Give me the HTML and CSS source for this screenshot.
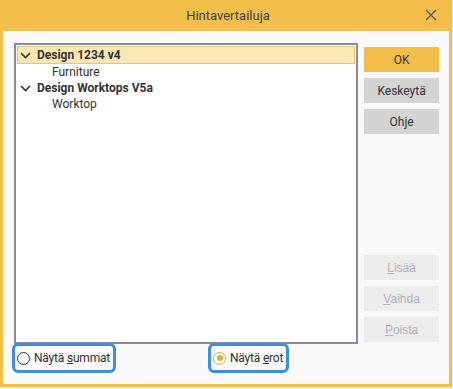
FILE: index.html
```html
<!DOCTYPE html>
<html lang="fi">
<head>
  <meta charset="UTF-8">
  <title>Hintavertailuja</title>
  <link rel="stylesheet" href="styles.css">
</head>
<body>

<div class="window">
  <div class="titlebar">
    <span class="title">Hintavertailuja</span>
    <button class="close-btn" aria-label="Sulje">
      <svg width="12" height="12" viewBox="0 0 12 12">
        <path d="M1 1 L11 11 M11 1 L1 11" stroke="#555" stroke-width="1.2" fill="none"/>
      </svg>
    </button>
  </div>

  <div class="content">
    <div class="main">
      <!-- Tree -->
      <div class="tree">
        <div class="row group selected">
          <svg class="chevron" width="11" height="7" viewBox="0 0 11 7">
            <path d="M1 1 L5.5 5.5 L10 1" stroke="#333" stroke-width="1.6" fill="none"/>
          </svg>
          <span>Design 1234 v4</span>
        </div>
        <div class="row child">Furniture</div>
        <div class="row group">
          <svg class="chevron" width="11" height="7" viewBox="0 0 11 7">
            <path d="M1 1 L5.5 5.5 L10 1" stroke="#333" stroke-width="1.6" fill="none"/>
          </svg>
          <span>Design Worktops V5a</span>
        </div>
        <div class="row child">Worktop</div>
      </div>

      <!-- Options -->
      <div class="options">
        <label class="radio focus">
          <span class="dot"></span>
          <span>Näytä <u>s</u>ummat</span>
        </label>
        <label class="radio focus checked">
          <span class="dot"></span>
          <span>Näytä <u>e</u>rot</span>
        </label>
      </div>
    </div>

    <div class="side">
      <div class="btn-group">
        <button class="btn primary">OK</button>
        <button class="btn">Keskeytä</button>
        <button class="btn">Ohje</button>
      </div>
      <div class="btn-group">
        <button class="btn disabled"><u>L</u>isää</button>
        <button class="btn disabled"><u>V</u>aihda</button>
        <button class="btn disabled"><u>P</u>oista</button>
      </div>
    </div>
  </div>
</div>

</body>
</html>
```

FILE: styles.css
```css
:root {
  --accent: #f4be4a;
  --text: #333;
  --panel: #f9f9f9;
  --btn: #d4d4d4;
  --btn-off: #ececec;
  --focus: #3a8ee6;
}

body {
  margin: 0;
  background: #ededed;
  font-family: Roboto, "Noto Sans", Arial, sans-serif;
  font-size: 12px;
  color: var(--text);
}

.window {
  width: 446px;
  height: 384px;
  border: 3px solid var(--accent);
  border-top: none;
  background: var(--panel);
  display: flex;
  flex-direction: column;
}

.titlebar {
  height: 31px;
  background: var(--accent);
  display: flex;
  align-items: center;
  justify-content: center;
  position: relative;
  margin: 0 -3px;
}

.title {
  font-size: 13px;
  color: #3f3f3f;
  padding-left: 4px;
}

.close-btn {
  position: absolute;
  right: 14px;
  top: 8px;
  border: none;
  background: none;
  padding: 0;
  width: 14px;
  height: 14px;
  display: flex;
  align-items: center;
  justify-content: center;
}

.content {
  flex: 1;
  display: flex;
  gap: 6px;
  padding: 12px 10px 0 11px;
}

.main {
  width: 345px;
  display: flex;
  flex-direction: column;
}

.tree {
  border: 2px solid #8b8b98;
  background: #fff;
  padding: 1px 1px 0;
  box-sizing: border-box;
  height: 301px;
}

.row {
  height: 16px;
  line-height: 16px;
  display: flex;
  align-items: center;
  white-space: nowrap;
}

.row.group {
  font-weight: bold;
  padding-left: 3px;
  gap: 6px;
}

.row.selected {
  background: #fde7b5;
  border: 1px solid #e2c582;
  padding-left: 2px;
}

.row.child {
  padding-left: 35px;
}

.chevron {
  flex: none;
}

.options {
  display: grid;
  grid-template-columns: 196px auto;
  justify-items: start;
  margin: -1px 0 0 -2px;
}

.radio {
  display: flex;
  align-items: center;
  gap: 4px;
  height: 24px;
  padding: 0 3px 0 2px;
  border: 3px solid transparent;
  border-radius: 6px;
  font-size: 12px;
  letter-spacing: -0.2px;
}

.radio.focus {
  border-color: var(--focus);
}

.dot {
  width: 11px;
  height: 11px;
  border: 1px solid #333;
  border-radius: 50%;
  background: #fff;
  position: relative;
  flex: none;
}

.radio.checked .dot {
  border-color: #e0a93a;
}

.radio.checked .dot::after {
  content: "";
  position: absolute;
  left: 2.5px;
  top: 2.5px;
  width: 6px;
  height: 6px;
  border-radius: 50%;
  background: #e8a93a;
}

.side {
  width: 75px;
  display: flex;
  flex-direction: column;
  justify-content: space-between;
  padding-top: 4px;
  height: 295px;
}

.btn-group {
  display: flex;
  flex-direction: column;
  gap: 6px;
}

.btn {
  height: 25px;
  border: none;
  background: var(--btn);
  font-family: inherit;
  font-size: 12px;
  color: var(--text);
  padding: 0;
}

.btn.primary {
  background: var(--accent);
}

.btn.disabled {
  background: var(--btn-off);
  color: #b3b3b3;
  font-family: "Liberation Sans", Arial, sans-serif;
}
```
